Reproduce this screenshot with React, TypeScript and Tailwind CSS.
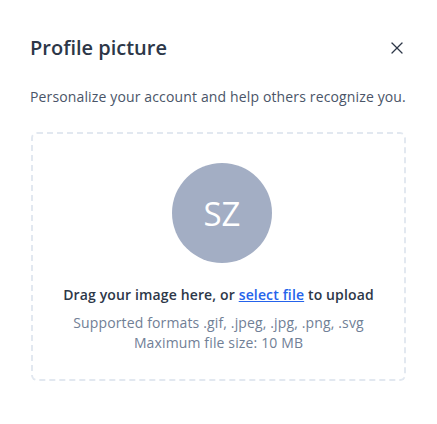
import { X } from 'lucide-react';

export default function App() {
  return (
    <div className="w-[437px] h-[424px] bg-white px-[30px] pt-[34px]" style={{ fontFamily: '"Open Sans", sans-serif' }}>
      <div className="flex items-center justify-between">
        <h2 className="text-[20px] leading-[28px] font-semibold text-[#2d3748]">Profile picture</h2>
        <button className="w-6 h-6 flex items-center justify-center text-[#2d3748] mr-[-2px]">
          <X size={20} strokeWidth={1.5} />
        </button>
      </div>
      <p className="mt-[25px] text-[14px] tracking-[0.14px] whitespace-nowrap leading-[20px] text-[#4a5568]">
        Personalize your account and help others recognize you.
      </p>
      <div className="mt-[25px] w-[375px] h-[249px] ml-[1px] border-2 border-dashed border-[#e2e8f0] rounded-md flex flex-col items-center pt-[29px]">
        <div className="ml-[7px] w-[100px] h-[100px] rounded-full bg-[#a3aec4] flex items-center justify-center text-white text-[33px] leading-none">
          SZ
        </div>
        <p className="mt-[22px] text-[14px] tracking-[0.14px] whitespace-nowrap leading-[20px] font-semibold text-[#2d3748]">
          Drag your image here, or{' '}
          <a href="#" className="text-[#2563eb] underline">select file</a> to upload
        </p>
        <p className="mt-[8px] text-[14px] tracking-[0.14px] whitespace-nowrap leading-[20px] text-[#718096] text-center">
          Supported formats .gif, .jpeg, .jpg, .png, .svg
          <br />
          Maximum file size: 10 MB
        </p>
      </div>
    </div>
  );
}
